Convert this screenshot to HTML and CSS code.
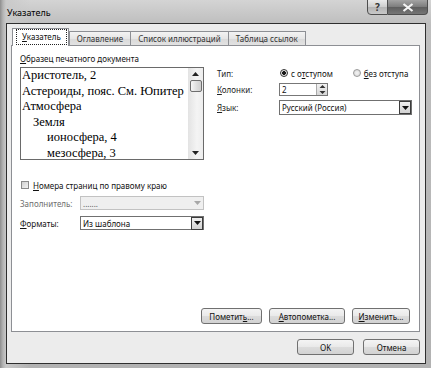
FILE: index.html
```html
<!DOCTYPE html>
<html lang="ru">
<head>
    <meta charset="UTF-8">
    <meta name="viewport" content="width=device-width, initial-scale=1.0">
    <title>Указатель</title>
    <link rel="stylesheet" href="styles.css">
</head>
<body>
    <div class="window">
        <div class="titlebar">
            <span class="title">Указатель</span>
            <div class="caption-buttons">
                <span class="cap-btn help">?</span>
                <span class="cap-btn close">
                    <svg width="12" height="9" viewBox="0 0 12 9"><path d="M1.5 1 L10.5 8 M10.5 1 L1.5 8" stroke="#f4f4f4" stroke-width="2.2" fill="none"/></svg>
                </span>
            </div>
        </div>

        <div class="client">
            <!-- Вкладки -->
            <div class="tabs">
                <div class="tab active"><span class="focus"><u>У</u>казатель</span></div>
                <div class="tab">Оглавление</div>
                <div class="tab">Список иллюстраций</div>
                <div class="tab">Таблица ссылок</div>
            </div>

            <div class="panel">
                <div class="top">
                    <div class="preview-col">
                        <div class="label"><u>О</u>бразец печатного документа</div>
                        <div class="preview">
                            <div class="preview-text">
                                <p>Аристотель, 2</p>
                                <p>Астероиды, пояс. См. Юпитер</p>
                                <p>Атмосфера</p>
                                <p class="lvl2">Земля</p>
                                <p class="lvl3">ионосфера, 4</p>
                                <p class="lvl3">мезосфера, 3</p>
                            </div>
                            <div class="scrollbar">
                                <span class="arrow"><svg width="7" height="4" viewBox="0 0 7 4"><path d="M0 4 L3.5 0 L7 4 Z" fill="#222"/></svg></span>
                                <span class="thumb"></span>
                                <span class="arrow bottom"><svg width="7" height="4" viewBox="0 0 7 4"><path d="M0 0 L7 0 L3.5 4 Z" fill="#222"/></svg></span>
                            </div>
                        </div>
                    </div>

                    <div class="options">
                        <span class="opt-label">Тип:</span>
                        <div class="radios">
                            <span class="radio checked"></span>
                            <span class="radio-text">с о<u>т</u>ступом</span>
                            <span class="radio"></span>
                            <span class="radio-text"><u>б</u>ез отступа</span>
                        </div>

                        <span class="opt-label"><u>К</u>олонки:</span>
                        <div class="spin">
                            <span class="spin-value">2</span>
                            <span class="spin-btns">
                                <svg width="9" height="11" viewBox="0 0 9 11"><path d="M1.5 4 L4.5 1 L7.5 4 Z M1.5 7 L7.5 7 L4.5 10 Z" fill="#333"/></svg>
                            </span>
                        </div>

                        <span class="opt-label"><u>Я</u>зык:</span>
                        <div class="combo">
                            <span class="combo-value">Русский (Россия)</span>
                            <span class="combo-btn"><svg width="7" height="4" viewBox="0 0 7 4"><path d="M0 0 L7 0 L3.5 4 Z" fill="#111"/></svg></span>
                        </div>
                    </div>
                </div>

                <div class="check-row">
                    <span class="checkbox"></span>
                    <span><u>Н</u>омера страниц по правому краю</span>
                </div>

                <div class="fields">
                    <span class="field-label disabled">Заполнитель:</span>
                    <div class="combo disabled">
                        <span class="combo-value">.......</span>
                        <span class="combo-btn"><svg width="7" height="4" viewBox="0 0 7 4"><path d="M0 0 L7 0 L3.5 4 Z" fill="#a8a8a8"/></svg></span>
                    </div>

                    <span class="field-label"><u>Ф</u>орматы:</span>
                    <div class="combo">
                        <span class="combo-value">Из шаблона</span>
                        <span class="combo-btn"><svg width="7" height="4" viewBox="0 0 7 4"><path d="M0 0 L7 0 L3.5 4 Z" fill="#111"/></svg></span>
                    </div>
                </div>

                <div class="panel-buttons">
                    <span class="button w-mark">Пометит<u>ь</u>...</span>
                    <span class="button w-auto"><u>А</u>втопометка...</span>
                    <span class="button w-edit"><u>И</u>зменить...</span>
                </div>
            </div>

            <div class="footer">
                <span class="button w-ok">OK</span>
                <span class="button w-ok">Отмена</span>
            </div>
        </div>
    </div>
</body>
</html>
```

FILE: styles.css
```css
/* Reset */
* {
    margin: 0;
    padding: 0;
    box-sizing: border-box;
}

body {
    font-family: 'Noto Sans', 'Open Sans', Arial, sans-serif;
    font-size: 8px;
    color: #111;
    background: #c4c4c4;
    overflow: hidden;
    white-space: nowrap;
}

u {
    text-decoration: underline;
    text-underline-offset: 1px;
}

/* Окно */
.window {
    width: 431px;
    height: 368px;
    display: flex;
    flex-direction: column;
    background:
        linear-gradient(90deg, #8e8e8e 0, #b4b4b4 3px, #c9c9c9 6px, rgba(201, 201, 201, 0) 30px),
        linear-gradient(180deg, #d4d4d4 0, #c9c9c9 12px, #bebebe 24px, #b2b2b2 100%);
}

.titlebar {
    height: 23px;
    display: flex;
    justify-content: space-between;
    align-items: flex-start;
    padding-left: 7px;
    padding-right: 3px;
}

.title {
    font-size: 9px;
    line-height: 12px;
    margin-top: 7px;
    color: #000;
}

.caption-buttons {
    display: flex;
    margin-top: -1px;
}

.cap-btn {
    height: 16px;
    display: flex;
    align-items: center;
    justify-content: center;
    border: 1px solid #4e4e4e;
}

.cap-btn.help {
    width: 21px;
    border-radius: 0 0 0 4px;
    font-size: 10px;
    font-weight: bold;
    color: #333;
    background: linear-gradient(180deg, #eaeaea, #cdcdcd 50%, #b4b4b4 51%, #c8c8c8);
}

.cap-btn.close {
    width: 40px;
    border-left: none;
    border-radius: 0 0 4px 0;
    background: linear-gradient(180deg, #a4a4a4, #7c7c7c 50%, #5e5e5e 51%, #767676);
}

/* Клиентская область */
.client {
    height: 341px;
    margin: 0 5px 0 6px;
    border: 1px solid #2e2e2e;
    background: #ececec;
    padding: 4px 5px 0 4px;
    display: flex;
    flex-direction: column;
}

.tabs {
    height: 17px;
    display: flex;
    align-items: flex-end;
    padding-left: 1px;
    position: relative;
    z-index: 1;
}

.tab {
    height: 14px;
    padding: 0 7px;
    display: flex;
    align-items: center;
    border: 1px solid #8d8f94;
    border-bottom: none;
    margin-left: -1px;
    color: #333;
    background: linear-gradient(180deg, #f3f3f3, #e6e6e6 50%, #d9d9d9 51%, #e2e2e2);
}

.tab.active {
    height: 18px;
    margin-bottom: -1px;
    margin-left: 0;
    padding: 0 1px 1px 3px;
    background: #fff;
    color: #111;
}

.tab.active + .tab {
    margin-left: 0;
}

.focus {
    border: 1px dotted #222;
    padding: 2px 5px;
    line-height: 10px;
}

.panel {
    height: 287px;
    background: #fff;
    border: 1px solid #8d8f94;
    padding: 7px 9px 7px 8px;
    display: flex;
    flex-direction: column;
}

.top {
    display: flex;
    gap: 13px;
}

.preview-col {
    flex: none;
    width: 184px;
}

.label {
    line-height: 12px;
    margin-bottom: 2px;
}

.preview {
    height: 93px;
    border: 1px solid #6a6a6a;
    display: flex;
}

.preview-text {
    flex: 1;
    min-width: 0;
    overflow: hidden;
    padding-left: 1px;
    font-family: 'Liberation Serif', 'Times New Roman', serif;
    font-size: 12.5px;
    line-height: 15.5px;
    color: #000;
}

.preview-text .lvl2 {
    padding-left: 11px;
}

.preview-text .lvl3 {
    padding-left: 25px;
}

.scrollbar {
    flex: none;
    width: 15px;
    display: flex;
    flex-direction: column;
    align-items: center;
    background: linear-gradient(90deg, #e3e3e3, #f4f4f4 60%, #ededed);
}

.arrow {
    height: 12px;
    display: flex;
    align-items: center;
}

.arrow.bottom {
    margin-top: auto;
}

.thumb {
    width: 12px;
    height: 12px;
    border: 1px solid #6e6e6e;
    border-radius: 2px;
    background: linear-gradient(90deg, #f6f6f6, #dedede 55%, #cfcfcf);
}

/* Параметры справа */
.options {
    flex: 1;
    margin-top: 14px;
    display: grid;
    grid-template-columns: 62px 1fr;
    grid-template-rows: 12px 13px 15px;
    row-gap: 4px;
    align-items: center;
}

.opt-label {
    color: #222;
}

.radios {
    display: flex;
    align-items: center;
    padding-left: 1px;
}

.radio {
    width: 8px;
    height: 8px;
    flex: none;
    border-radius: 50%;
    border: 1px solid #9a9a9a;
    background: radial-gradient(circle, #f4f4f4, #d4d4d4);
}

.radio.checked {
    border-color: #333;
    background: radial-gradient(circle, #1a1a1a 0, #1a1a1a 1.6px, #e8e8e8 2.2px);
}

.radio-text {
    margin-left: 3px;
    margin-right: 20px;
}

.spin {
    width: 49px;
    height: 13px;
    border: 1px solid #777;
    background: #fff;
    display: flex;
    align-items: center;
}

.spin-value {
    flex: 1;
    padding-left: 2px;
}

.spin-btns {
    width: 11px;
    height: 11px;
    display: flex;
    align-items: center;
    justify-content: center;
    border-left: 1px solid #aaa;
    background: linear-gradient(180deg, #f2f2f2, #d6d6d6);
}

.combo {
    width: 133px;
    height: 15px;
    border: 1px solid #707070;
    background: #fff;
    display: flex;
    align-items: center;
}

.combo-value {
    flex: 1;
    padding-left: 2px;
}

.combo-btn {
    width: 12px;
    height: 13px;
    display: flex;
    align-items: center;
    justify-content: center;
    border: 1px solid #3c3c3c;
    background: linear-gradient(180deg, #f0f0f0, #d2d2d2);
}

/* Флажок и поля */
.check-row {
    margin-top: 19px;
    height: 12px;
    display: flex;
    align-items: center;
    gap: 4px;
    padding-left: 1px;
}

.checkbox {
    width: 8px;
    height: 8px;
    border: 1px solid #8a8a8a;
    background: linear-gradient(135deg, #d0d0d0, #f2f2f2);
}

.fields {
    margin-top: 5px;
    display: grid;
    grid-template-columns: 60px 124px;
    grid-template-rows: 14px 14px;
    row-gap: 6px;
    align-items: center;
}

.fields .combo {
    width: 124px;
    height: 14px;
}

.field-label.disabled {
    color: #6e6e6e;
}

.combo.disabled {
    background: #efefef;
    border-color: #c2c2c2;
    color: #555;
}

.combo.disabled .combo-btn {
    border: none;
    background: none;
}

/* Кнопки */
.panel-buttons {
    margin-top: auto;
    display: flex;
    justify-content: flex-end;
    gap: 7px;
}

.button {
    height: 16px;
    display: flex;
    align-items: center;
    justify-content: center;
    border: 1px solid #707070;
    border-radius: 3px;
    color: #111;
    background: linear-gradient(180deg, #f4f4f4, #e9e9e9 50%, #dcdcdc 51%, #d2d2d2);
}

.w-mark {
    width: 61px;
}

.w-auto {
    width: 76px;
}

.w-edit {
    width: 58px;
}

.w-ok {
    width: 57px;
}

.footer {
    margin-top: 7px;
    display: flex;
    justify-content: flex-end;
    gap: 9px;
}
```
